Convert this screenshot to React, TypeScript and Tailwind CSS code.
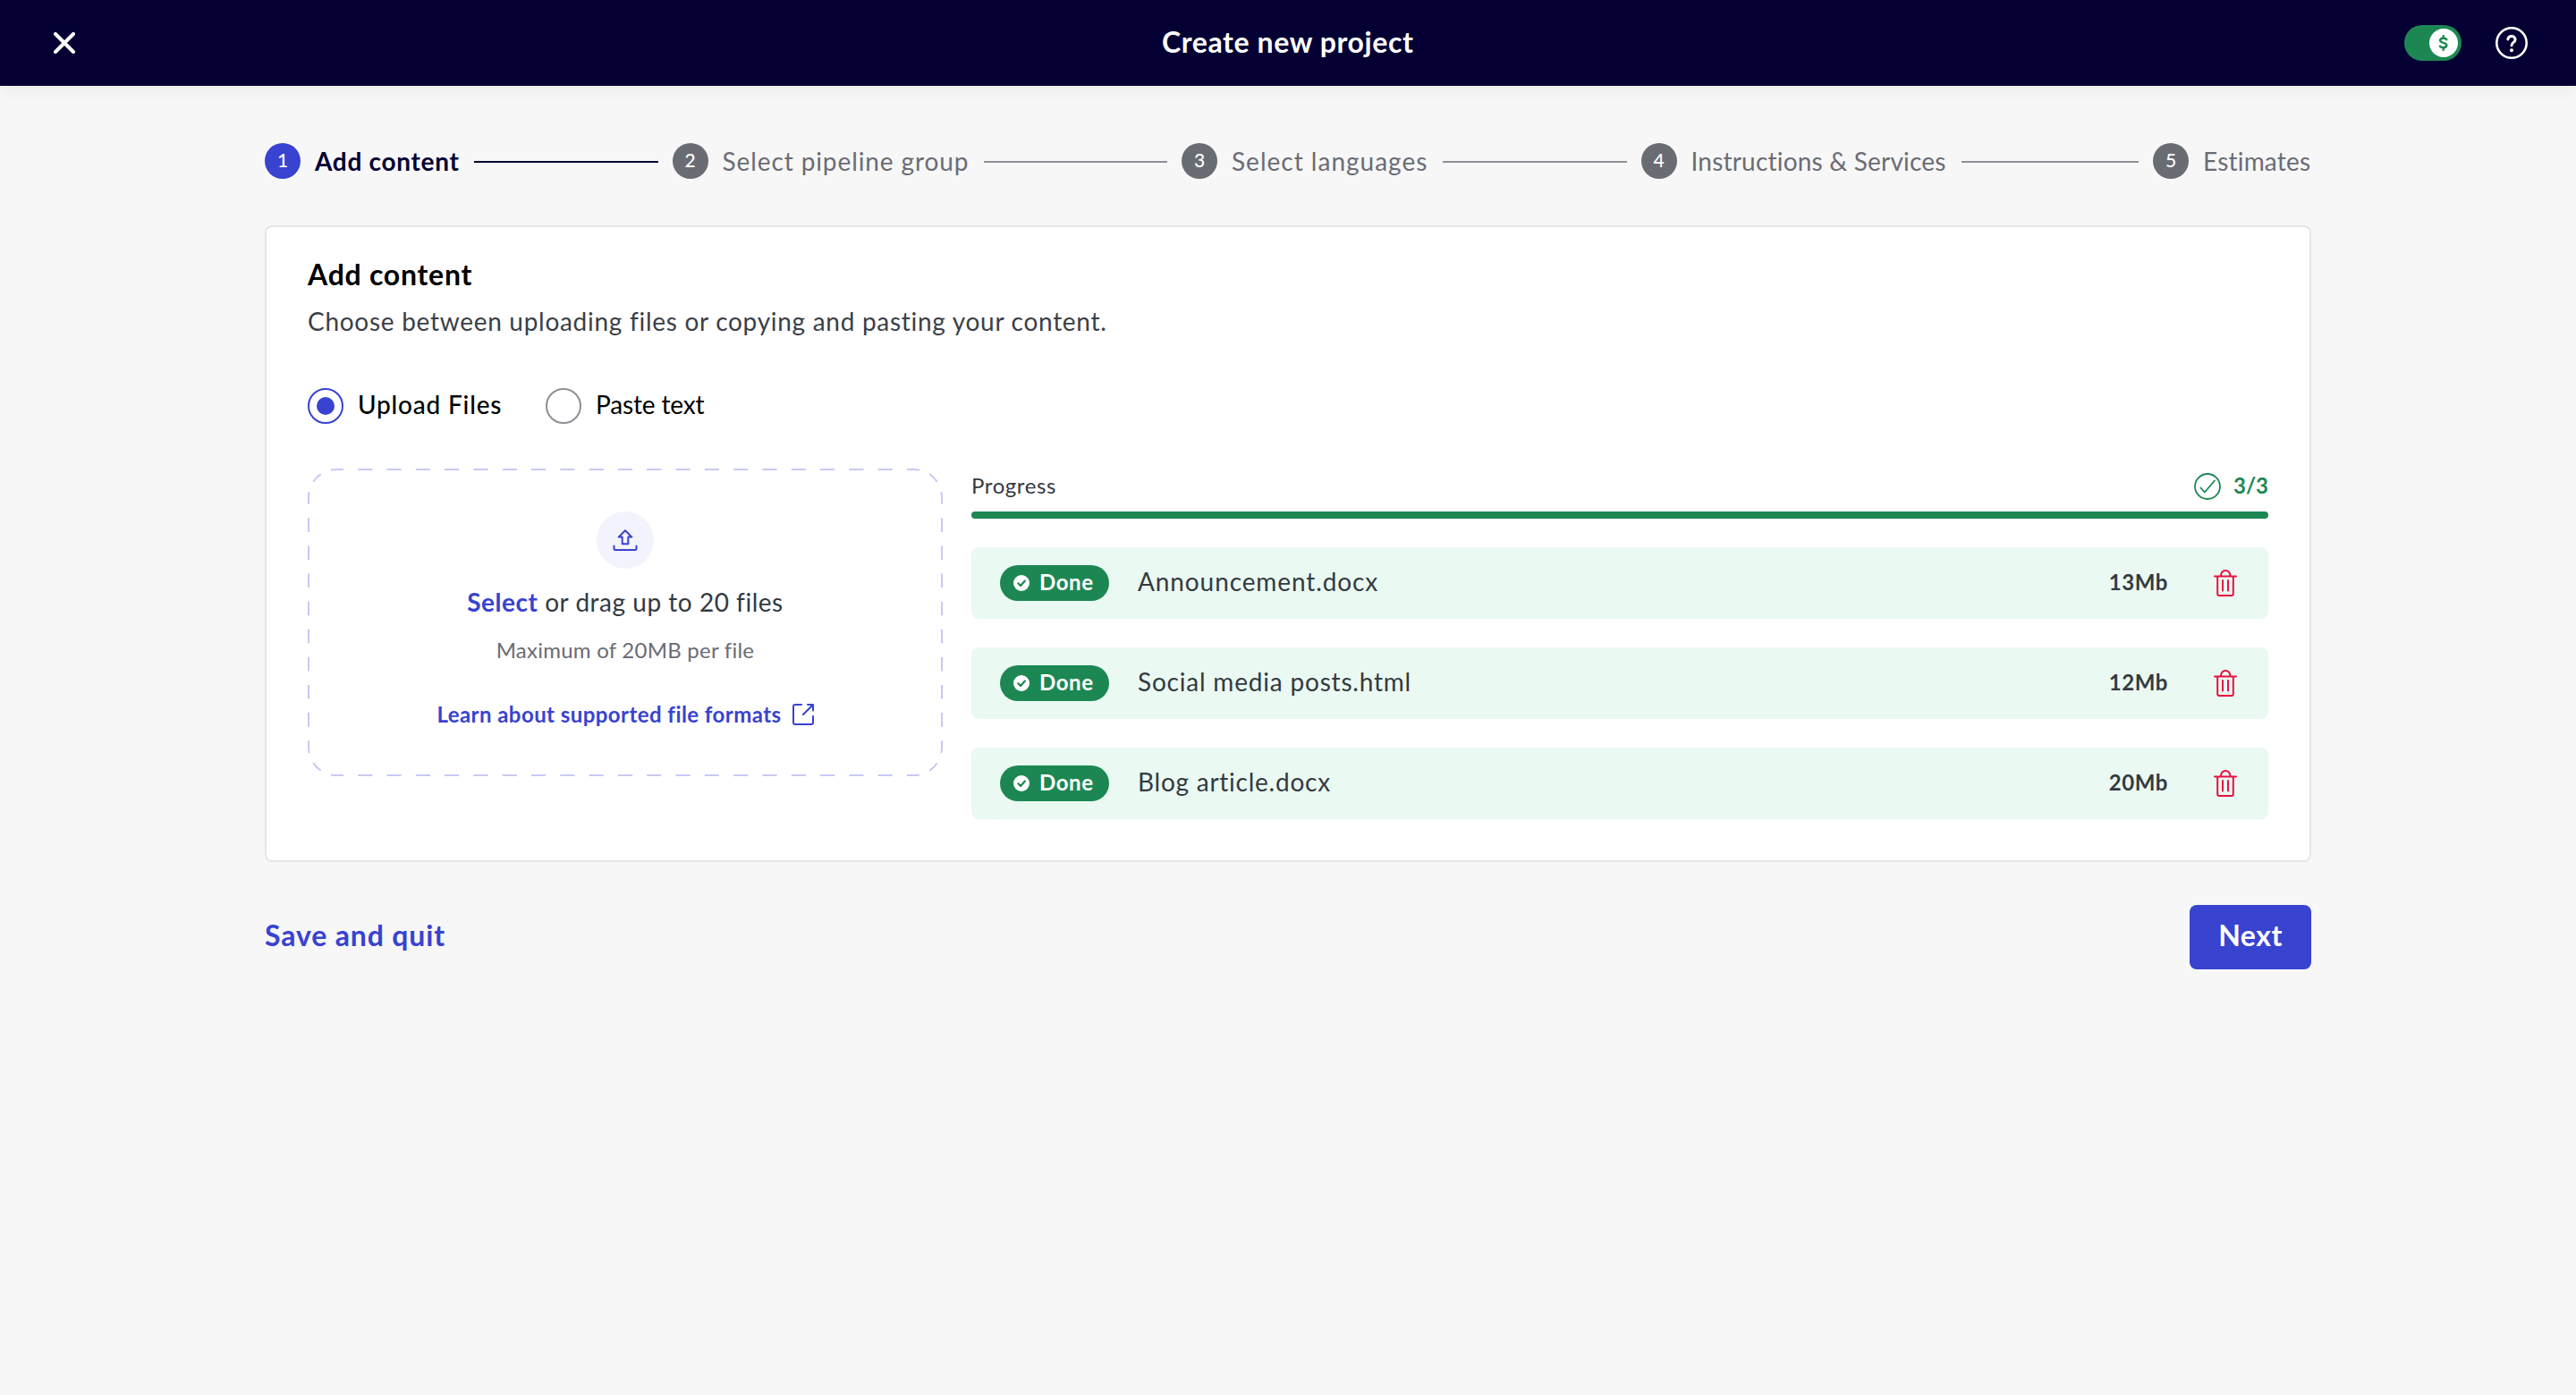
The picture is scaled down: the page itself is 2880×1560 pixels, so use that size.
import { clsx } from "clsx";

const steps = [
  { label: "Add content", box: "w-[162px]", text: "tracking-[0.7px]" },
  { label: "Select pipeline group", box: "w-[276px]", text: "tracking-[0.9px]" },
  { label: "Select languages", box: "w-[220px]", text: "tracking-[1px]" },
  { label: "Instructions & Services", box: "w-[286px]", text: "tracking-[0.2px]" },
  { label: "Estimates", box: "w-[121px]", text: "tracking-[0.2px]" },
];

const files = [
  { name: "Announcement.docx", size: "13Mb", text: "tracking-[0.9px]" },
  { name: "Social media posts.html", size: "12Mb", text: "tracking-[0.8px]" },
  { name: "Blog article.docx", size: "20Mb", text: "tracking-[0.75px]" },
];

function Header() {
  return (
    <header className="relative flex h-24 items-center justify-between bg-[#040033] pl-[60px] pr-[54px] shadow-[0_4px_16px_rgba(0,20,10,0.06)]">
      <svg className="size-6" viewBox="0 0 24 24" stroke="white" strokeWidth="4" strokeLinecap="round">
        <path d="M2 2L22 22M22 2L2 22" />
      </svg>
      <h1 className="absolute left-[1299px] whitespace-nowrap pb-0.5 text-[32px]/[40px] font-bold tracking-[0.6px] text-white">
        Create new project
      </h1>
      <div className="flex items-center gap-[38px]">
        <div className="flex h-10 w-16 items-center justify-end rounded-full bg-[#1d8753] pr-1">
          <div className="flex size-8 items-center justify-center rounded-full bg-white">
            <svg className="size-8" viewBox="0 0 32 32" fill="none" stroke="#1d8753" strokeWidth="2.5" strokeLinecap="round" strokeLinejoin="round">
              <path d="M19.3 12.2C18.6 11.2 17.3 10.8 15.8 10.8C13.5 10.8 12.2 11.9 12.2 13.3C12.2 16.6 19.3 15.1 19.3 18.4C19.3 20.1 17.9 21.1 15.8 21.1C14 21.1 12.8 20.7 12 19.8M15.7 8.2V10.8M15.7 21.1V23.8" />
            </svg>
          </div>
        </div>
        <svg className="size-9" viewBox="0 0 36 36" fill="none" stroke="white" strokeWidth="2.6" strokeLinecap="round">
          <circle cx="18" cy="18" r="16.7" />
          <path d="M13.9 13.9C14.2 11.7 15.9 10.5 18 10.5C20.4 10.5 22.1 12 22.1 14.2C22.1 17.5 18 17.2 18 20.8" strokeWidth="3" />
          <circle cx="18" cy="26.2" r="2" fill="white" stroke="none" />
        </svg>
      </div>
    </header>
  );
}

function Stepper() {
  return (
    <ol className="flex h-10 items-center gap-4">
      {steps.map((step, i) => (
        <li key={step.label} className={clsx("flex items-center gap-4", i === 3 && "flex-1")}>
          <span
            className={clsx(
              "flex size-10 shrink-0 items-center justify-center rounded-full pb-0.5 text-[21px]/[38px] font-medium text-white",
              i === 0 ? "bg-[#3843d0]" : "bg-[#6a6c74]"
            )}
          >
            {i + 1}
          </span>
          <span
            className={clsx(
              "whitespace-nowrap text-[28px]/[40px]",
              step.box,
              step.text,
              i === 0 ? "font-bold text-[#040033]" : "text-[#6a6c74]"
            )}
          >
            {step.label}
          </span>
          {i < steps.length - 1 && (
            <span
              className={clsx(
                "mt-0.5 h-0.5",
                i === 3 ? "flex-1" : "w-[205.5px]",
                i === 0 ? "bg-[#040033]" : "bg-[#8d9096]"
              )}
            />
          )}
        </li>
      ))}
    </ol>
  );
}

function DashedOutline() {
  return (
    <svg className="absolute inset-0 h-full w-full" viewBox="0 0 710 344" fill="none" stroke="#c8c9f4" strokeWidth="2">
      <path d="M32 1H678M32 343H678" strokeDasharray="16.15" strokeDashoffset="8.075" />
      <path d="M1 32V312M709 32V312" strokeDasharray="15.556" strokeDashoffset="7.778" />
      <path
        d="M1 32A31 31 0 0 1 32 1M678 1A31 31 0 0 1 709 32M709 312A31 31 0 0 1 678 343M32 343A31 31 0 0 1 1 312"
        strokeDasharray="12.174"
        strokeDashoffset="6.087"
      />
    </svg>
  );
}

function Dropzone() {
  return (
    <div className="relative flex h-[344px] w-[710px] flex-col items-center pt-12">
      <DashedOutline />
      <div className="flex size-16 items-center justify-center rounded-full bg-[#f3f3fd]">
        <svg className="size-7" viewBox="0 0 28 28" fill="none" stroke="#3843d0" strokeWidth="2" strokeLinecap="round" strokeLinejoin="round">
          <path d="M14 3.2L21.4 10.6H17.3V18.3H10.7V10.6H6.6Z" />
          <path d="M1.5 20.5V23.5Q1.5 25 3 25H25Q26.5 25 26.5 23.5V20.5" />
        </svg>
      </div>
      <p className="mt-[17px] whitespace-nowrap text-[28px]/[40px] tracking-[0.52px] text-[#343941]">
        <span className="font-bold text-[#3843d0]">Select</span> or drag up to 20 files
      </p>
      <p className="mt-4 whitespace-nowrap text-[24px]/[36px] tracking-[0.24px] text-[#6a6c74]">
        Maximum of 20MB per file
      </p>
      <a className="mt-9 flex items-center gap-3 whitespace-nowrap text-[24px]/[36px] font-bold tracking-[0.44px] text-[#3843d0]">
        Learn about supported file formats
        <svg className="size-6" viewBox="0 0 24 24" fill="none" stroke="#3843d0" strokeWidth="2" strokeLinecap="round" strokeLinejoin="round">
          <path d="M10 1H3Q1 1 1 3V21Q1 23 3 23H21Q23 23 23 21V14M17 1H23V7.5M23 1L12 12" />
        </svg>
      </a>
    </div>
  );
}

function FileRow({ name, size, text }: { name: string; size: string; text: string }) {
  return (
    <li className="flex h-20 items-center rounded-lg bg-[#eaf9f2] pl-8 pr-[34px] text-[#343941]">
      <span className="flex h-10 w-[122px] items-center rounded-full bg-[#1d8753] pl-[15px] text-[24px]/[40px] font-bold tracking-[0.6px] text-white">
        <svg className="mr-[11px] size-[18px]" viewBox="0 0 18 18" fill="none">
          <circle cx="9" cy="9" r="9" fill="white" />
          <path d="M5.3 9.3L8 11.9L12.9 6.6" stroke="#1d8753" strokeWidth="2.2" strokeLinecap="round" strokeLinejoin="round" />
        </svg>
        <span className="pb-0.5">Done</span>
      </span>
      <span className={clsx("ml-8 whitespace-nowrap pb-1 text-[28px]/[40px]", text)}>{name}</span>
      <span className="ml-auto pb-0.5 text-[24px]/[40px] font-bold tracking-[0.6px]">{size}</span>
      <svg className="ml-[50px] h-[30px] w-7" viewBox="0 0 28 30" fill="none" stroke="#e6123f" strokeWidth="2" strokeLinecap="round" strokeLinejoin="round">
        <path d="M2 7.5H26M8.9 7C9.3 3.3 11.2 1 14.2 1C17.2 1 19.1 3.3 19.5 7M5.2 7.5V27Q5.2 29 7.2 29H20.8Q22.8 29 22.8 27V7.5M11 12V23.5M17 12V23.5" />
      </svg>
    </li>
  );
}

function Progress() {
  return (
    <div className="flex-1">
      <div className="flex h-12 items-start pt-[5px]">
        <span className="-mt-1.5 text-[24px]/[40px] tracking-[0.6px] text-[#343941]">Progress</span>
        <svg className="ml-auto mr-3.5 size-[30px]" viewBox="0 0 30 30" fill="none" stroke="#1d8753" strokeWidth="1.8" strokeLinecap="round" strokeLinejoin="round">
          <circle cx="15" cy="15" r="14" />
          <path d="M7.5 16.5L11.8 21.5L23 8.5" />
        </svg>
        <span className="-mt-1.5 text-[24px]/[40px] font-bold text-[#1d8753]">3/3</span>
      </div>
      <div className="h-2 rounded-full bg-[#1d8753]" />
      <ul className="mt-8 flex flex-col gap-8">
        {files.map((file) => (
          <FileRow key={file.name} {...file} />
        ))}
      </ul>
    </div>
  );
}

export default function App() {
  return (
    <div className="h-[1560px] w-[2880px] overflow-hidden bg-[#f7f7f7] font-['Lato',sans-serif]">
      <Header />
      <main className="mx-auto w-[2288px] pt-16">
        <Stepper />

        <section className="mt-[52px] h-[712px] rounded-lg border-2 border-[#e6e6e6] bg-white px-[46px] pt-[31px]">
          <h2 className="text-[32px]/[44px] font-bold tracking-[0.75px] text-black">Add content</h2>
          <p className="mt-2.5 text-[28px]/[40px] tracking-[0.71px] text-[#3b3f47]">
            Choose between uploading files or copying and pasting your content.
          </p>

          {/* Source choice */}
          <div className="mt-[55px] flex h-10 items-center">
            <span className="flex size-10 items-center justify-center rounded-full border-2 border-[#3843d0]">
              <span className="size-5 rounded-full bg-[#3843d0]" />
            </span>
            <span className="ml-4 w-[210px] pb-1 text-[28px]/[40px] font-medium tracking-[0.8px] text-black">
              Upload Files
            </span>
            <span className="size-10 rounded-full border-2 border-[#8d9096]" />
            <span className="ml-4 pb-1 text-[28px]/[40px] tracking-[-0.15px] text-black">Paste text</span>
          </div>

          <div className="mt-[50px] flex gap-8">
            <Dropzone />
            <Progress />
          </div>
        </section>

        {/* Footer actions */}
        <div className="mt-12 flex h-[72px] items-center justify-between">
          <button className="pb-1 text-[32px]/[44px] font-bold tracking-[0.85px] text-[#3843d0]">Save and quit</button>
          <button className="h-[72px] w-[136px] rounded-lg bg-[#3843d0] pb-1 text-[32px]/[44px] font-bold tracking-[0.5px] text-white">
            Next
          </button>
        </div>
      </main>
    </div>
  );
}
